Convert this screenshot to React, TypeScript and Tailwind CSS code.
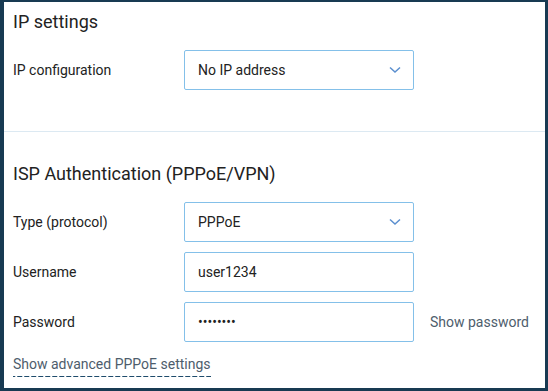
import React from 'react';

function Chevron() {
  return (
    <svg width="12" height="8" viewBox="0 0 12 8" className="shrink-0">
      <path d="M1 1.5 L6 6 L11 1.5" fill="none" stroke="#5b8fcf" strokeWidth="1.5" />
    </svg>
  );
}

function Row({ label, children, extra }: { label: string; children: React.ReactNode; extra?: React.ReactNode }) {
  return (
    <div className="flex items-center h-10">
      <div className="w-[171px] shrink-0 text-[14px] text-[#222]">{label}</div>
      {children}
      {extra}
    </div>
  );
}

function Select({ value }: { value: string }) {
  return (
    <div className="w-[230px] h-10 border border-[#84c0e9] rounded-[2px] flex items-center justify-between pl-[13px] pr-[12px] text-[14px] text-[#222]">
      <span>{value}</span>
      <Chevron />
    </div>
  );
}

function Field({ value, type = 'text' }: { value: string; type?: string }) {
  return (
    <input
      type={type}
      defaultValue={value}
      readOnly
      className="w-[230px] h-10 border border-[#84c0e9] rounded-[2px] pl-[13px] text-[14px] text-[#222] outline-none"
    />
  );
}

export default function App() {
  return (
    <div className="w-[548px] h-[391px] box-border bg-white border-[#183a52] border-l-4 border-t-2 border-r-[3px] border-b-[3px] font-['Roboto',sans-serif] overflow-hidden">
      <div className="pl-[9px] pt-2 pb-[41px]">
        <h2 className="text-[18px] leading-6 text-[#222] mb-4">IP settings</h2>
        <Row label="IP configuration">
          <Select value="No IP address" />
        </Row>
      </div>
      <div className="h-px bg-[#dce9f2]" />
      <div className="pl-[9px] pt-[30px]">
        <h2 className="text-[18px] leading-6 text-[#222] mb-4">ISP Authentication (PPPoE/VPN)</h2>
        <div className="flex flex-col gap-[10px]">
          <Row label="Type (protocol)">
            <Select value="PPPoE" />
          </Row>
          <Row label="Username">
            <Field value="user1234" />
          </Row>
          <Row
            label="Password"
            extra={<span className="ml-4 text-[14px] text-[#4e5d6c]">Show password</span>}
          >
            <Field value="12345678" type="password" />
          </Row>
        </div>
        <div className="mt-[10px]">
          <span className="inline-block text-[14px] leading-5 text-[#4e5d6c] pb-[3px] bg-[linear-gradient(to_right,#1e4b6b_70%,transparent_0)] bg-[length:7px_1px] bg-repeat-x bg-bottom">
            Show advanced PPPoE settings
          </span>
        </div>
      </div>
    </div>
  );
}
